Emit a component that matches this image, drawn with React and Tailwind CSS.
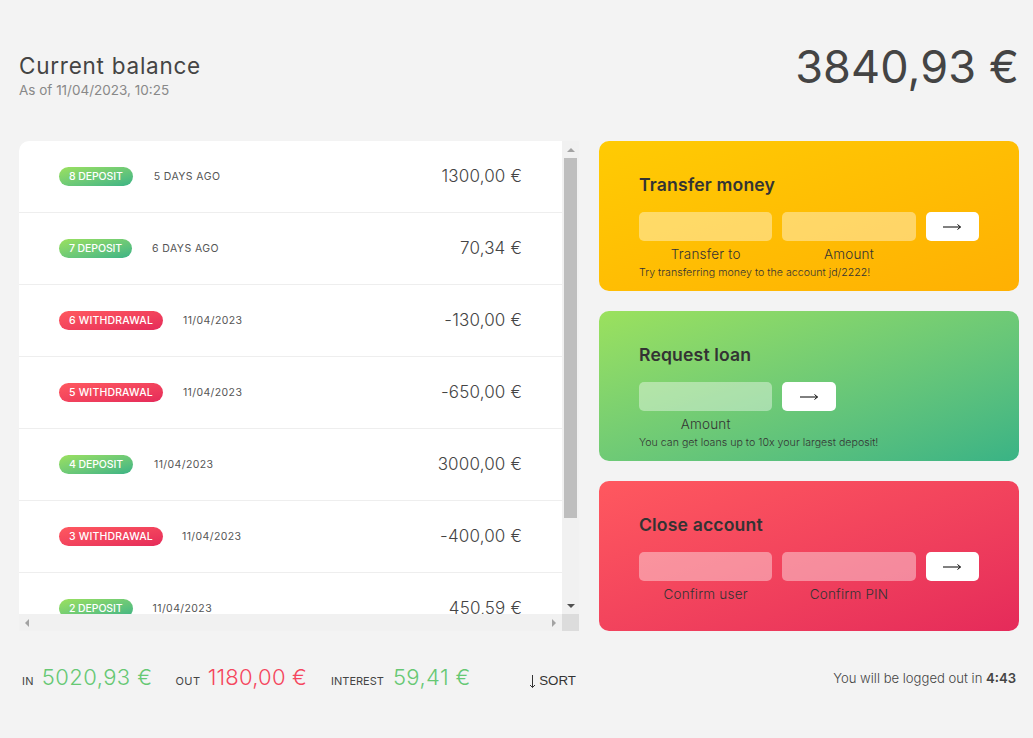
const FONT = "font-['Inter','Noto_Sans',sans-serif]"

const MOVEMENTS = [
  { n: 8, type: 'deposit', date: '5 days ago', value: '1300,00 €', dateGap: 'ml-[21px]' },
  { n: 7, type: 'deposit', date: '6 days ago', value: '70,34 €', dateGap: 'ml-[20px]' },
  { n: 6, type: 'withdrawal', date: '11/04/2023', value: '-130,00 €', dateGap: 'ml-[20px]' },
  { n: 5, type: 'withdrawal', date: '11/04/2023', value: '-650,00 €', dateGap: 'ml-[20px]' },
  { n: 4, type: 'deposit', date: '11/04/2023', value: '3000,00 €', dateGap: 'ml-[21px]' },
  { n: 3, type: 'withdrawal', date: '11/04/2023', value: '-400,00 €', dateGap: 'ml-[19px]' },
  { n: 2, type: 'deposit', date: '11/04/2023', value: '450,59 €', dateGap: 'ml-[20px]' },
]

function Arrow({ dir, color }) {
  const points = {
    up: '0,4 4,0 8,4',
    down: '0,0 8,0 4,4',
    left: '4,0 4,8 0,4',
    right: '0,0 4,4 0,8',
  }
  const size = dir === 'up' || dir === 'down' ? 'w-2 h-1' : 'w-1 h-2'
  return (
    <svg viewBox={dir === 'up' || dir === 'down' ? '0 0 8 4' : '0 0 4 8'} className={size}>
      <polygon points={points[dir]} fill={color} />
    </svg>
  )
}

function Movement({ n, type, date, value, dateGap }) {
  const badge = type === 'deposit'
    ? 'from-[#39b385] to-[#9be15d] tracking-[-0.1px]'
    : 'from-[#e52a5a] to-[#ff585f] tracking-[0.17px]'
  return (
    <div className="h-[72px] shrink-0 flex items-center pl-10 pr-10 border-b border-[#eeeeee]">
      <div className={`h-[19px] px-[10px] rounded-full bg-linear-to-tl ${badge} text-white text-[10.5px] font-medium uppercase flex items-center`}>
        {n} {type}
      </div>
      <div className={`${dateGap} text-[10.5px] tracking-[0.4px] uppercase text-[#555555]`}>{date}</div>
      <div className="ml-auto text-[17px] font-light tracking-[0.15px] text-[#444444]">{value}</div>
    </div>
  )
}

function SubmitButton() {
  return (
    <div className="h-[29px] rounded-[5px] bg-white flex items-center justify-center">
      <svg viewBox="0 0 18 8" className="w-[18px] h-[8px]" fill="none" stroke="#000000" strokeWidth="1">
        <path d="M0 4H17.5M14.5 1.5L17.5 4L14.5 6.5" />
      </svg>
    </div>
  )
}

function Card({ title, gradient, cols, fields, note }) {
  return (
    <div className={`rounded-[10px] px-10 pt-[33px] bg-linear-to-tl ${gradient} text-[#333333]`}>
      <h2 className="text-[17.6px] leading-[21px] font-semibold tracking-[0.15px]">{title}</h2>
      <div className={`mt-[17px] grid ${cols} gap-x-[10px]`}>
        {fields.map((f) => (
          <div key={f} className="h-[29px] rounded-[5px] bg-white/40" />
        ))}
        <SubmitButton />
        {fields.length === 1 && <div />}
        {fields.map((f) => (
          <div key={f} className="mt-[5px] text-center text-[13.5px] tracking-[0.2px] font-light leading-[16px] text-[#333333]">{f}</div>
        ))}
      </div>
      {note && <p className="mt-[4px] text-[10.6px] tracking-[0.02px] leading-[14px] font-light text-[#333333]">{note}</p>}
    </div>
  )
}

export default function App() {
  return (
    <div className={`${FONT} min-h-screen w-full bg-[#f3f3f3] text-[#444444] overflow-hidden`}>
      <div className="w-[1000px] ml-[19px] pt-[40px]">
        {/* Balance */}
        <div className="h-[101px] flex justify-between items-start">
          <div className="pt-[11px]">
            <p className="text-[22.5px] leading-[30px] tracking-[0.75px] text-[#444444]">Current balance</p>
            <p className="-mt-px text-[13.5px] leading-[20px] text-[#888888]">As of 11/04/2023, 10:25</p>
          </div>
          <p className="text-[45px] leading-[54px] tracking-[0.1px] text-[#444444]">3840,93 €</p>
        </div>

        {/* Main */}
        <div className="grid grid-cols-[560px_420px] grid-rows-[150px_150px_150px] gap-x-5 gap-y-5">
          <div className="row-span-3 flex flex-col rounded-tl-[10px] overflow-hidden">
            <div className="flex h-[473px]">
              <div className="w-[543px] bg-white flex flex-col overflow-hidden">
                {MOVEMENTS.map((m) => (
                  <Movement key={m.n} {...m} />
                ))}
              </div>
              <div className="w-[17px] bg-[#f1f1f1] flex flex-col items-center">
                <div className="h-[17px] flex items-center justify-center">
                  <Arrow dir="up" color="#a3a3a3" />
                </div>
                <div className="w-[13px] h-[360px] bg-[#bebebe]" />
                <div className="mt-auto h-[17px] flex items-center justify-center">
                  <Arrow dir="down" color="#505050" />
                </div>
              </div>
            </div>
            <div className="flex h-[17px]">
              <div className="w-[543px] bg-[#f1f1f1] flex items-center justify-between px-[6px]">
                <Arrow dir="left" color="#a3a3a3" />
                <Arrow dir="right" color="#a3a3a3" />
              </div>
              <div className="w-[17px] bg-[#dcdcdc]" />
            </div>
          </div>

          <Card
            title="Transfer money"
            gradient="from-[#ffb003] to-[#ffcb03]"
            cols="grid-cols-[2.5fr_2.5fr_1fr]"
            fields={['Transfer to', 'Amount']}
            note="Try transferring money to the account jd/2222!"
          />
          <Card
            title="Request loan"
            gradient="from-[#39b385] to-[#9be15d]"
            cols="grid-cols-[2.5fr_1fr_2.5fr]"
            fields={['Amount']}
            note="You can get loans up to 10x your largest deposit!"
          />
          <Card
            title="Close account"
            gradient="from-[#e52a5a] to-[#ff585f]"
            cols="grid-cols-[2.5fr_2.5fr_1fr]"
            fields={['Confirm user', 'Confirm PIN']}
          />
        </div>

        {/* Footer */}
        <div className="mt-[30px] h-[32px] flex items-baseline">
          <div className="w-[557px] pl-[3px] flex items-baseline">
            <span className="text-[11px] font-normal tracking-[0.3px] uppercase text-[#444444]">In</span>
            <span className="ml-[8px] text-[22px] font-light tracking-[0.42px] text-[#66c873]">5020,93 €</span>
            <span className="ml-[23px] text-[11px] font-normal tracking-[0.5px] uppercase text-[#444444]">Out</span>
            <span className="ml-[7px] text-[22px] font-light tracking-[0.2px] text-[#f5465d]">1180,00 €</span>
            <span className="ml-[24px] text-[11px] font-normal uppercase text-[#444444]">Interest</span>
            <span className="ml-[9px] text-[22px] font-light tracking-[0.4px] text-[#66c873]">59,41 €</span>
            <span className="ml-auto flex items-baseline font-['Liberation_Sans',sans-serif] text-[13.33px] text-[#333333]">
              <svg viewBox="0 0 7 13" className="w-[7px] h-[13px] mr-[3px] translate-y-[3px]" fill="none" stroke="#333333" strokeWidth="1">
                <path d="M3.5 0V12.5M1 10L3.5 12.5L6 10" />
              </svg>
              SORT
            </span>
          </div>
          <p className="ml-auto mr-[3px] -translate-y-[2px] text-[13.1px] font-light text-[#444444]">
            You will be logged out in <span className="font-semibold">4:43</span>
          </p>
        </div>
      </div>
    </div>
  )
}
